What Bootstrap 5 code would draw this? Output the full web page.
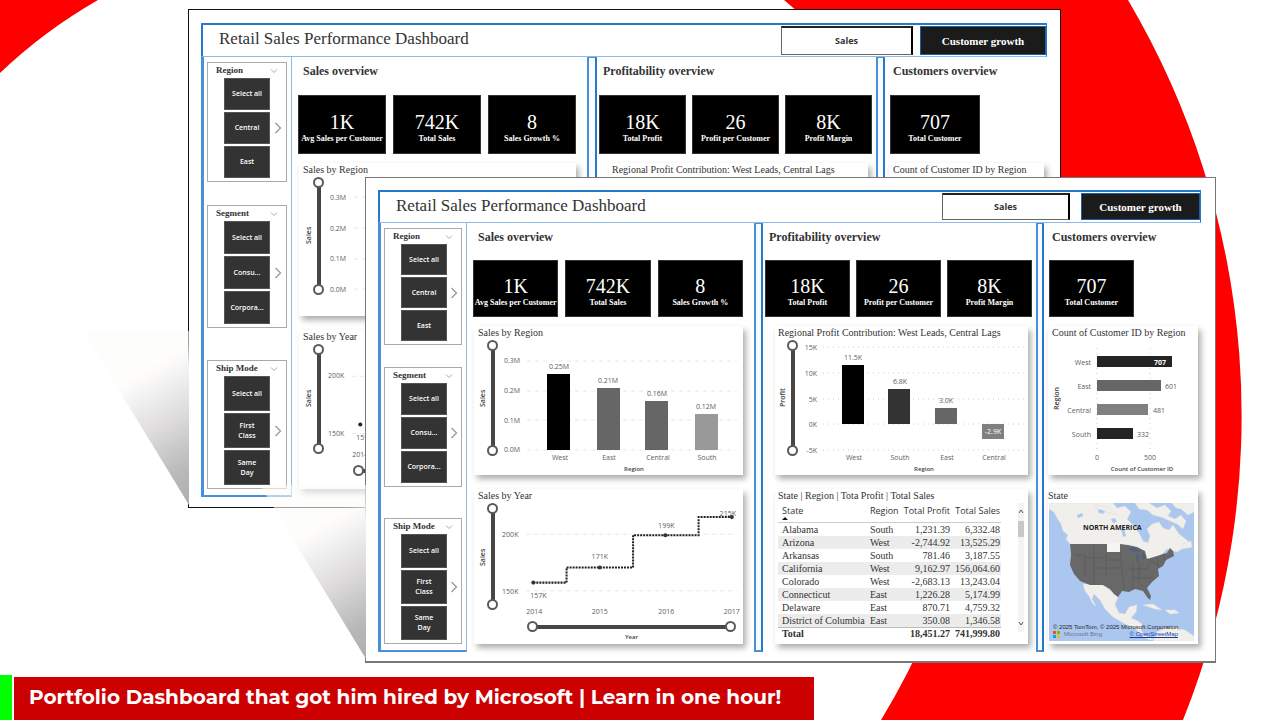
<!DOCTYPE html>
<html lang="en">
<head>
<meta charset="utf-8">
<meta name="viewport" content="width=device-width, initial-scale=1">
<title>Retail Sales Performance Dashboard</title>
<link href="https://cdn.jsdelivr.net/npm/bootstrap@5.3.0/dist/css/bootstrap.min.css" rel="stylesheet">
<style>
:root{--serif:"Liberation Serif",serif;--sans:"Open Sans",sans-serif;--blue:#2878c8;--pale:#8dbbe8}
body{font-family:var(--sans);background:#fff;overflow-x:hidden}
.backdrop{z-index:-1}
.stage>*{grid-area:1/1;align-self:start}
.report{background:#fff;border:1px solid #111;min-width:0;
 --item-w:46px;--kpi-h:59px;padding:13px 13px 10px 12px;margin:9px 219px 0 188px}
.report-front{border-color:#777;--kpi-h:57px;padding:12px 14px 9px 12px;margin:177px 64px 0 365px;border-bottom-width:2px}
.cast{right:100%;bottom:0;width:106px;pointer-events:none}
.topbar{border:1px solid var(--pale);border-top:2px solid var(--blue);border-left:2px solid var(--blue);border-right-color:var(--blue);height:34px;padding:1px 0 0 16px}
.report-front .topbar{height:33px}
.topbar h1{font:17px/26px var(--serif);color:#333}
.topbar button{height:29px;border-radius:0;padding:0}
.report-front .topbar button{height:27px}
.tab-sales{width:132px;margin-right:7px;background:#fff;border:1px solid #666;border-top:2px solid #222;border-right:2px solid #000;font:bold 9px/20px var(--sans);color:#333}
.tab-growth{width:126px;background:#1b1b1b;border:1px solid #1b5fa8;font:bold 11px/20px var(--serif);color:#fff}
.report-front .tab-sales{width:128px;margin-right:11px}
.report-front .tab-growth{width:119px}
.sheet{display:grid;grid-template-columns:91px 295fr 10px 279fr 9px 162fr}
.report-front .sheet{grid-template-columns:89px 287fr 9px 273fr 8px 157fr}
.sheet>*{min-width:0}
.rail{border:1px solid var(--pale);border-top:0;border-left:3px solid #4a90d9;border-bottom:2px solid #4a90d9;padding:5px 4px 6px 3px}
.divider{border:2px solid #4a90d9;border-top-width:1px;border-right-color:var(--blue);background:#f8fbff}
.slicer{border:1px solid #aaa;padding:0 0 3px;--item-h:32px}
.slicer+.slicer{margin-top:23px;--item-h:33px}
.slicer+.slicer+.slicer{margin-top:32px;--item-h:35px}
.report-front .slicer{--item-h:31px}
.report-front .slicer+.slicer{margin-top:22px;--item-h:32px}
.report-front .slicer+.slicer+.slicer{margin-top:31px;--item-h:34px}
.slicer h2{font:bold 9px/15px var(--serif);color:#333;padding:0 8px 0 8px}
.slicer .items{display:grid;grid-template-columns:16px var(--item-w) 1fr;row-gap:2px}
.slicer .items button{grid-column:2;height:var(--item-h);padding:0 2px;border:1px solid #555;border-radius:0;background:#333;color:#fff;font:600 7px/10px var(--sans)}
.slicer .items .next{grid-column:3;grid-row:2;background:none;border:0;padding:0;line-height:0}
.panel{padding:7px 0 0}
.panel h2{font:bold 12px/14px var(--serif);color:#333;margin:0 0 17px}
.report-front .panel h2{margin-bottom:16px}
.kpis{display:flex;margin-bottom:9px}
.kpi{flex:1 1 0;min-width:0;height:var(--kpi-h);background:#000;border:1px solid #333;color:#fff;text-align:center;padding-top:15px;white-space:nowrap}
.report-front .kpi{padding-top:14px}
.kpi output{display:block;font:20px/23px var(--serif)}
.kpi label{display:block;font:bold 8px/10px var(--serif);margin:0 -4px}
.p-sales h2{padding-left:11px}.p-sales .kpis{margin-left:6px;margin-right:11px;gap:7px}
.p-sales .viz{margin-left:7px;margin-right:11px}
.p-profit h2{padding-left:6px}.p-profit .kpis{margin-left:2px;margin-right:4px;gap:6px}
.p-profit .viz{margin-left:12px;margin-right:8px}
.p-cust h2{padding-left:8px}.p-cust .kpis{margin-left:5px;margin-right:67px}
.p-cust .viz{margin-left:4px;margin-right:3px}
.viz{background:#fff;box-shadow:3px 4px 6px rgba(0,0,0,.32);min-height:153px}
.viz+.viz{margin-top:14px;min-height:159px}
.report-front .viz{min-height:149px}
.report-front .viz+.viz{min-height:155px}
.viz h3{font:10px/14px var(--serif);color:#333;margin:0;padding-left:4px;white-space:nowrap}
.p-profit .viz h3{padding-left:3px}
.ylab{writing-mode:vertical-rl;transform:rotate(180deg);font:600 7px/8px var(--sans);color:#444;text-align:center;width:8px;height:116px;margin-left:6px}
.report-front .ylab{margin-left:5px}
.report-front .p-profit .ylab{margin-left:4px}
.ylab.low{height:108px}
.plot{flex:1 1 0;min-width:0;align-self:flex-start;font-family:var(--sans);font-size:7px}
.plot text{fill:#605e5c}
.plot .axis{font-weight:600;fill:#444;font-size:6px}
.plot .inv{fill:#fff}
.mid{text-anchor:middle}.fin{text-anchor:end}
.gridln{stroke:#e8e8e8;stroke-width:1;stroke-dasharray:4 4;fill:none}
.dots{stroke-dasharray:1 4;stroke:#ccc}
.zoomv{position:relative;width:11px;height:118px;--len:118px}
.zoomv.short{height:110px;--len:110px}
.report-front .zoomv{height:116px;--len:116px}
.report-front .zoomv.short{height:107px;--len:107px}
.zoomv::before{content:"";position:absolute;left:4px;top:6px;bottom:6px;width:4px;background:#484644}
.zoomh{position:relative;height:11px;margin:3px 7px 0 31px}
.zoomh::before{content:"";position:absolute;top:4px;left:6px;right:6px;height:4px;background:#484644}
.zoomv input,.zoomh input{position:absolute;left:0;top:0;height:11px;width:100%;margin:0;background:none;-webkit-appearance:none;appearance:none;pointer-events:none}
.zoomv input{top:100%;width:var(--len);transform:rotate(-90deg);transform-origin:0 0}
.zoomv input::-webkit-slider-thumb,.zoomh input::-webkit-slider-thumb{-webkit-appearance:none;width:11px;height:11px;border:2px solid #5a5a5a;border-radius:50%;background:#fff;pointer-events:auto}
.axis-name{font:600 6px/10px var(--sans);color:#444}
.grid-data{font:10px/12px var(--serif);color:#333;width:auto;margin:0 0 0 3px;flex:1 1 0}
.grid-data th,.grid-data td{padding:0 1px 0 4px;border:0;height:13px;line-height:13px;white-space:nowrap;color:#333}
.grid-data>thead th{font:9px/12px var(--sans);border-bottom:1px solid #ccc;height:19px;vertical-align:top;padding-top:2px}
.grid-data tbody tr:nth-child(even) td{background:#ececec}
.grid-data tfoot td{font-weight:700;border-top:1px solid #bbb;line-height:12px}
.grid-data .caret{display:block;width:0;height:0;border:3px solid transparent;border-top:0;border-bottom-color:#111}
.scroller{width:6px;margin:0 4px 8px 17px;background:#f3f3f3;line-height:0}
.scroller i{display:block;height:16px;background:#c8c8c8}
.map{margin:0 4px 0 1px;line-height:0}
.credits{left:4px;right:0;bottom:3px;font:6px/7px "Liberation Sans",sans-serif;color:#222;white-space:nowrap}
.credits a{color:#1a3a9a}
.lower{margin-top:13px}
.lower .tick{width:12px;background:#0f0;margin-right:2px}
.lower p{width:calc(62.5vw);min-width:780px;background:#c00;color:#fff;font:700 20px/40px Montserrat,Inter,sans-serif;margin:2px 0 0;padding:0 0 3px 15px;white-space:nowrap}
</style>
</head>
<body class="min-vh-100 d-flex flex-column position-relative m-0">
<svg class="backdrop position-absolute top-0 start-0 w-100 h-100" viewBox="0 0 1280 720" preserveAspectRatio="none" aria-hidden="true">
 <path fill="#f00" d="M0 0H98Q44 31 0 73Z"/>
 <path fill="#f00" d="M784 0H1128A818 818 0 0 1 1183 720H881Q960 590 1000 400Q930 120 784 0Z"/>
</svg>
<svg width="0" height="0" class="position-absolute" aria-hidden="true"><defs>
 <linearGradient id="cast" gradientUnits="userSpaceOnUse" x1="66" y1="36" x2="134" y2="150">
  <stop offset="0" stop-color="#fdfcf9" stop-opacity=".6"/><stop offset=".15" stop-color="#f4f3f3"/><stop offset=".45" stop-color="#dcdadb"/><stop offset=".8" stop-color="#b9b9b9"/><stop offset="1" stop-color="#b0b0b0"/>
 </linearGradient>
 <symbol id="chev" viewBox="0 0 8 6"><path d="M1 1.5L4 4.5L7 1.5" fill="none" stroke="#aaa"/></symbol>
 <symbol id="next" viewBox="0 0 8 12"><path d="M1.500 1L6.500 6L1.500 11" fill="none" stroke="#999" stroke-width="1.300"/></symbol>
</defs></svg>

<main class="stage d-grid">
 <!-- rear report -->
 <section class="report position-relative" aria-label="Report, rear copy">
  <svg class="cast position-absolute" viewBox="0 0 106 176" aria-hidden="true"><path d="M0 0H106V174Z" fill="url(#cast)"/></svg>
  <header class="topbar d-flex"><h1 class="m-0 me-auto">Retail Sales Performance Dashboard</h1><button class="btn tab-sales">Sales</button><button class="btn tab-growth">Customer growth</button></header>
  <div class="sheet">
   <aside class="rail">
    <div class="slicer"><h2 class="m-0 d-flex justify-content-between align-items-center">Region<svg width="8" height="6"><use href="#chev"/></svg></h2><div class="items"><button>Select all</button><button>Central</button><button>East</button><button class="next" aria-label="More regions"><svg width="8" height="12"><use href="#next"/></svg></button></div></div>
    <div class="slicer"><h2 class="m-0 d-flex justify-content-between align-items-center">Segment<svg width="8" height="6"><use href="#chev"/></svg></h2><div class="items"><button>Select all</button><button>Consu...</button><button>Corpora...</button><button class="next" aria-label="More segments"><svg width="8" height="12"><use href="#next"/></svg></button></div></div>
    <div class="slicer"><h2 class="m-0 d-flex justify-content-between align-items-center">Ship Mode<svg width="8" height="6"><use href="#chev"/></svg></h2><div class="items"><button>Select all</button><button>First<br>Class</button><button>Same<br>Day</button><button class="next" aria-label="More ship modes"><svg width="8" height="12"><use href="#next"/></svg></button></div></div>
   </aside>
   <div class="panel p-sales"><h2>Sales overview</h2>
    <div class="kpis"><div class="kpi"><output id="b1">1K</output><label for="b1">Avg Sales per Customer</label></div><div class="kpi"><output id="b2">742K</output><label for="b2">Total Sales</label></div><div class="kpi"><output id="b3">8</output><label for="b3">Sales Growth %</label></div></div>
    <div class="viz"><h3>Sales by Region</h3><div class="d-flex"><div class="ylab">Sales</div><div class="zoomv"><input type="range" value="0" aria-label="Sales minimum"><input type="range" value="100" aria-label="Sales maximum"></div>
     <svg class="plot" viewBox="0 0 252 139"><path class="gridln" d="M30 20H246M30 51H246M30 82H246M30 112H246"/><text x="6" y="23">0.3M</text><text x="6" y="54">0.2M</text><text x="6" y="84">0.1M</text><text x="6" y="115">0.0M</text></svg></div></div>
    <div class="viz"><h3>Sales by Year</h3><div class="d-flex"><div class="ylab low">Sales</div><div class="zoomv short"><input type="range" value="0" aria-label="Sales minimum"><input type="range" value="100" aria-label="Sales maximum"></div>
     <div class="flex-fill"><svg class="plot d-block w-100" viewBox="0 0 252 117"><path class="gridln" d="M30 32H246M30 89H246"/><text x="6" y="34">200K</text><text x="6" y="91">150K</text><circle cx="38" cy="80" r="2" fill="#222"/><text x="34" y="95">157K</text><text class="mid" x="38" y="112">2014</text></svg>
     <div class="zoomh"><input type="range" value="0" aria-label="First year"><input type="range" value="100" aria-label="Last year"></div></div></div></div>
   </div>
   <div class="divider"></div>
   <div class="panel p-profit"><h2>Profitability overview</h2>
    <div class="kpis"><div class="kpi"><output id="b4">18K</output><label for="b4">Total Profit</label></div><div class="kpi"><output id="b5">26</output><label for="b5">Profit per Customer</label></div><div class="kpi"><output id="b6">8K</output><label for="b6">Profit Margin</label></div></div>
    <div class="viz"><h3>Regional Profit Contribution: West Leads, Central Lags</h3></div>
   </div>
   <div class="divider"></div>
   <div class="panel p-cust"><h2>Customers overview</h2>
    <div class="kpis"><div class="kpi"><output id="b7">707</output><label for="b7">Total Customer</label></div></div>
    <div class="viz"><h3>Count of Customer ID by Region</h3></div>
   </div>
  </div>
 </section>

 <!-- front report -->
 <section class="report report-front position-relative" aria-label="Report, front copy">
  <svg class="cast position-absolute" viewBox="0 0 106 176" aria-hidden="true"><path d="M0 0H106V174Z" fill="url(#cast)"/></svg>
  <header class="topbar d-flex"><h1 class="m-0 me-auto">Retail Sales Performance Dashboard</h1><button class="btn tab-sales">Sales</button><button class="btn tab-growth">Customer growth</button></header>
  <div class="sheet">
   <aside class="rail">
    <div class="slicer"><h2 class="m-0 d-flex justify-content-between align-items-center">Region<svg width="8" height="6"><use href="#chev"/></svg></h2><div class="items"><button>Select all</button><button>Central</button><button>East</button><button class="next" aria-label="More regions"><svg width="8" height="12"><use href="#next"/></svg></button></div></div>
    <div class="slicer"><h2 class="m-0 d-flex justify-content-between align-items-center">Segment<svg width="8" height="6"><use href="#chev"/></svg></h2><div class="items"><button>Select all</button><button>Consu...</button><button>Corpora...</button><button class="next" aria-label="More segments"><svg width="8" height="12"><use href="#next"/></svg></button></div></div>
    <div class="slicer"><h2 class="m-0 d-flex justify-content-between align-items-center">Ship Mode<svg width="8" height="6"><use href="#chev"/></svg></h2><div class="items"><button>Select all</button><button>First<br>Class</button><button>Same<br>Day</button><button class="next" aria-label="More ship modes"><svg width="8" height="12"><use href="#next"/></svg></button></div></div>
   </aside>
   <div class="panel p-sales"><h2>Sales overview</h2>
    <div class="kpis"><div class="kpi"><output id="f1">1K</output><label for="f1">Avg Sales per Customer</label></div><div class="kpi"><output id="f2">742K</output><label for="f2">Total Sales</label></div><div class="kpi"><output id="f3">8</output><label for="f3">Sales Growth %</label></div></div>
    <div class="viz"><h3>Sales by Region</h3><div class="d-flex"><div class="ylab">Sales</div><div class="zoomv"><input type="range" value="0" aria-label="Sales minimum"><input type="range" value="100" aria-label="Sales maximum"></div>
     <svg class="plot" viewBox="0 0 245 135"><path class="gridln" d="M29 21H239M29 51H239M29 80H239M29 110H239"/>
      <text x="6" y="23">0.3M</text><text x="6" y="53">0.2M</text><text x="6" y="83">0.1M</text><text x="6" y="112">0.0M</text>
      <rect x="49" y="34" width="23" height="76"/><rect x="99" y="48" width="23" height="62" fill="#666"/><rect x="147" y="61" width="23" height="49" fill="#666"/><rect x="197" y="74" width="23" height="36" fill="#999"/>
      <g class="mid"><text x="61" y="29">0.25M</text><text x="110" y="43">0.21M</text><text x="159" y="56">0.16M</text><text x="208" y="69">0.12M</text>
      <text x="62" y="120">West</text><text x="111" y="120">East</text><text x="160" y="120">Central</text><text x="209" y="120">South</text><text class="axis" x="136" y="131">Region</text></g></svg></div></div>
    <div class="viz"><h3>Sales by Year</h3><div class="d-flex"><div class="ylab low">Sales</div><div class="zoomv short"><input type="range" value="0" aria-label="Sales minimum"><input type="range" value="100" aria-label="Sales maximum"></div>
     <div class="flex-fill"><svg class="plot d-block w-100" viewBox="0 0 245 114"><path class="gridln" d="M30 31H239M30 87H239"/><text x="6" y="34">200K</text><text x="6" y="90">150K</text>
      <path d="M37 79H70V64H136V32H201V14H234" fill="none" stroke="#222" stroke-width="2" stroke-dasharray="2 1"/>
      <g fill="#333"><circle cx="37" cy="79" r="2"/><circle cx="103" cy="64" r="2"/><circle cx="168" cy="32" r="2"/><circle cx="234" cy="14" r="2"/></g>
      <g class="mid"><text x="42" y="94">157K</text><text x="103" y="56">171K</text><text x="169" y="25">199K</text><text x="230" y="13">215K</text>
      <text x="38" y="110">2014</text><text x="103" y="110">2015</text><text x="169" y="110">2016</text><text x="234" y="110">2017</text></g></svg>
     <div class="zoomh"><input type="range" value="0" aria-label="First year"><input type="range" value="100" aria-label="Last year"></div>
     <div class="axis-name text-center ps-4">Year</div></div></div></div>
   </div>
   <div class="divider"></div>
   <div class="panel p-profit"><h2>Profitability overview</h2>
    <div class="kpis"><div class="kpi"><output id="f4">18K</output><label for="f4">Total Profit</label></div><div class="kpi"><output id="f5">26</output><label for="f5">Profit per Customer</label></div><div class="kpi"><output id="f6">8K</output><label for="f6">Profit Margin</label></div></div>
    <div class="viz"><h3>Regional Profit Contribution: West Leads, Central Lags</h3><div class="d-flex"><div class="ylab">Profit</div><div class="zoomv"><input type="range" value="0" aria-label="Profit minimum"><input type="range" value="100" aria-label="Profit maximum"></div>
     <svg class="plot" viewBox="0 0 230 135"><path class="gridln dots" d="M25 7H228M25 33H228M25 59H228M25 84H228M25 110H228"/>
      <g class="fin"><text x="19" y="10">15K</text><text x="19" y="36">10K</text><text x="19" y="62">5K</text><text x="19" y="87">0K</text><text x="19" y="113">-5K</text></g>
      <rect x="44" y="25" width="22" height="59"/><rect x="90" y="49" width="22" height="35" fill="#333"/><rect x="137" y="68" width="22" height="16" fill="#666"/><rect x="184" y="84" width="22" height="15" fill="#808080"/>
      <g class="mid"><text x="55" y="20">11.5K</text><text x="102" y="44">6.8K</text><text x="148" y="63">3.0K</text><text class="inv" x="195" y="94">-2.9K</text>
      <text x="56" y="120">West</text><text x="102" y="120">South</text><text x="149" y="120">East</text><text x="196" y="120">Central</text><text class="axis" x="126" y="131">Region</text></g></svg></div></div>
    <div class="viz"><h3>State | Region | Tota Profit | Total Sales</h3><div class="d-flex">
     <table class="grid-data"><thead><tr><th>State<span class="caret"></span></th><th>Region</th><th class="text-end">Total Profit</th><th class="text-end">Total Sales</th></tr></thead>
      <tbody><tr><td>Alabama</td><td>South</td><td class="text-end">1,231.39</td><td class="text-end">6,332.48</td></tr>
      <tr><td>Arizona</td><td>West</td><td class="text-end">-2,744.92</td><td class="text-end">13,525.29</td></tr>
      <tr><td>Arkansas</td><td>South</td><td class="text-end">781.46</td><td class="text-end">3,187.55</td></tr>
      <tr><td>California</td><td>West</td><td class="text-end">9,162.97</td><td class="text-end">156,064.60</td></tr>
      <tr><td>Colorado</td><td>West</td><td class="text-end">-2,683.13</td><td class="text-end">13,243.04</td></tr>
      <tr><td>Connecticut</td><td>East</td><td class="text-end">1,226.28</td><td class="text-end">5,174.99</td></tr>
      <tr><td>Delaware</td><td>East</td><td class="text-end">870.71</td><td class="text-end">4,759.32</td></tr>
      <tr><td>District of Columbia</td><td>East</td><td class="text-end">350.08</td><td class="text-end">1,346.58</td></tr></tbody>
      <tfoot><tr><td>Total</td><td></td><td class="text-end">18,451.27</td><td class="text-end">741,999.80</td></tr></tfoot></table>
     <div class="scroller d-flex flex-column"><svg width="6" height="18" viewBox="0 0 6 18"><path d="M1 10L3 7L5 10" fill="none" stroke="#555"/></svg><i></i><svg class="mt-auto" width="6" height="18" viewBox="0 0 6 18"><path d="M1 8L3 11L5 8" fill="none" stroke="#555"/></svg></div></div></div>
   </div>
   <div class="divider"></div>
   <div class="panel p-cust"><h2>Customers overview</h2>
    <div class="kpis"><div class="kpi"><output id="f7">707</output><label for="f7">Total Customer</label></div></div>
    <div class="viz"><h3>Count of Customer ID by Region</h3><div class="d-flex"><div class="ylab">Region</div>
     <svg class="plot" viewBox="0 0 137 135"><path class="gridln dots" d="M36 8V112M89 8V112"/>
      <g class="fin"><text x="30" y="25">West</text><text x="30" y="49">East</text><text x="30" y="73">Central</text><text x="30" y="97">South</text></g>
      <rect x="36" y="16" width="75" height="11" fill="#252423"/><rect x="36" y="40" width="64" height="11" fill="#666"/><rect x="36" y="64" width="51" height="11" fill="#808080"/><rect x="36" y="88" width="36" height="11" fill="#252423"/>
      <text class="inv fw-bold" x="93" y="25">707</text><text x="104" y="49">601</text><text x="92" y="73">481</text><text x="76" y="97">332</text>
      <g class="mid"><text x="36" y="120">0</text><text x="89" y="120">500</text><text class="axis" x="81" y="131">Count of Customer ID</text></g></svg></div></div>
    <div class="viz"><h3 class="ps-0 ms-0">State</h3><div class="map position-relative">
     <svg class="w-100" viewBox="0 0 145 138" role="img" aria-label="Map of North America with the United States shaded"><rect width="145" height="138" fill="#abc7f0"/>
      <g fill="#f0efec" stroke="#dddcd8" stroke-width=".5">
       <path d="M0 0H64L68 5L76 3L82 9L78 16L84 22L90 30L94 38L99 40L101 33L98 26L103 21L110 19L114 25L120 27L124 22L130 31L139 38L143 44L133 46L128 49L118 46L112 53L100 57L94 62H24L22 50L21 41L17 36L19 32L14 28L12 21L8 15L5 9L0 6Z"/>
       <path d="M86 0H100L108 5L116 2L122 8L119 13L126 16L132 12L137 18L134 26L128 21L121 18L112 14L104 12L98 7L90 6Z"/>
       <path d="M123 0H145V9L139 12L132 6L127 5ZM46 2L60 4L68 12L58 9L50 10Z"/>
       <path d="M133 41L142 38L143 44L136 45Z"/>
       <path d="M40 81L54 82L62 88L69 94L66 102L70 110L76 111L80 104L88 102L87 109L82 115L89 118L93 121L92 128L98 134L106 136L101 137L93 133L86 125L76 121L64 114L56 106L51 97L45 91L43 96L47 103L44 101L40 93L36 88L34 81Z"/>
       <path d="M94 102L104 101L113 107L106 106ZM116 107L126 107L130 110L121 111Z"/>
       <path d="M104 138L108 129L114 126L124 124L136 127L145 133V138Z"/>
      </g>
      <path fill="#abc7f0" d="M50 6L56 8L54 11L49 9ZM62 16L66 15L68 19L64 20ZM28 12L33 10L34 13L29 15ZM72 26L75 25L77 33L74 34Z"/>
      <path d="M21 41H58V49H71V41L79 42L88 44L96 48L98 56L108 53L114 51L118 50L121 45L124 48L125 53L117 57L114 63L109 66L110 73L103 79L98 85L102 93L101 97L98 94L94 88L86 86L80 89L73 88L69 94L65 91L61 86L54 82L41 82L31 78L25 71L21 62L22 52Z" fill="#686868"/>
      <path d="M26 52H36V73M45 42V82M36 55H57M45 65H73M57 50V73M57 57H72M71 49L73 65L75 87M84 60V86M80 66H98M90 60V80M98 56L110 62M84 75H105M101 61L97 68M108 54L110 65M114 51L116 58" fill="none" stroke="#565656" stroke-width=".6"/>
      <path d="M79 46L85 44L92 48L89 49L82 48ZM88 51L90 53L89 59L87 58ZM94 49L97 54L93 57Z" fill="#4c617f"/>
      <rect x="58" y="40" width="13" height="9" fill="#f6f5f2"/>
      <text x="34" y="27" font-family="Open Sans,sans-serif" font-size="7" font-weight="700" fill="#222">NORTH AMERICA</text>
     </svg>
     <div class="credits position-absolute"><div>© 2025 TomTom, © 2025 Microsoft Corporation,</div><div class="d-flex"><svg class="me-1" width="7" height="7" viewBox="0 0 7 7"><path fill="#f25022" d="M0 0h3v3H0z"/><path fill="#7fba00" d="M4 0h3v3H4z"/><path fill="#00a4ef" d="M0 4h3v3H0z"/><path fill="#ffb900" d="M4 4h3v3H4z"/></svg><span class="text-secondary">Microsoft Bing</span><a class="ms-auto me-3" href="#osm">© OpenStreetMap</a></div></div>
    </div></div>
   </div>
  </div>
 </section>
</main>
<footer class="lower d-flex mt-auto"><span class="tick"></span><p>Portfolio Dashboard that got him hired by Microsoft | Learn in one hour!</p></footer>
<script src="https://cdn.jsdelivr.net/npm/bootstrap@5.3.0/dist/js/bootstrap.bundle.min.js"></script>
</body>
</html>
